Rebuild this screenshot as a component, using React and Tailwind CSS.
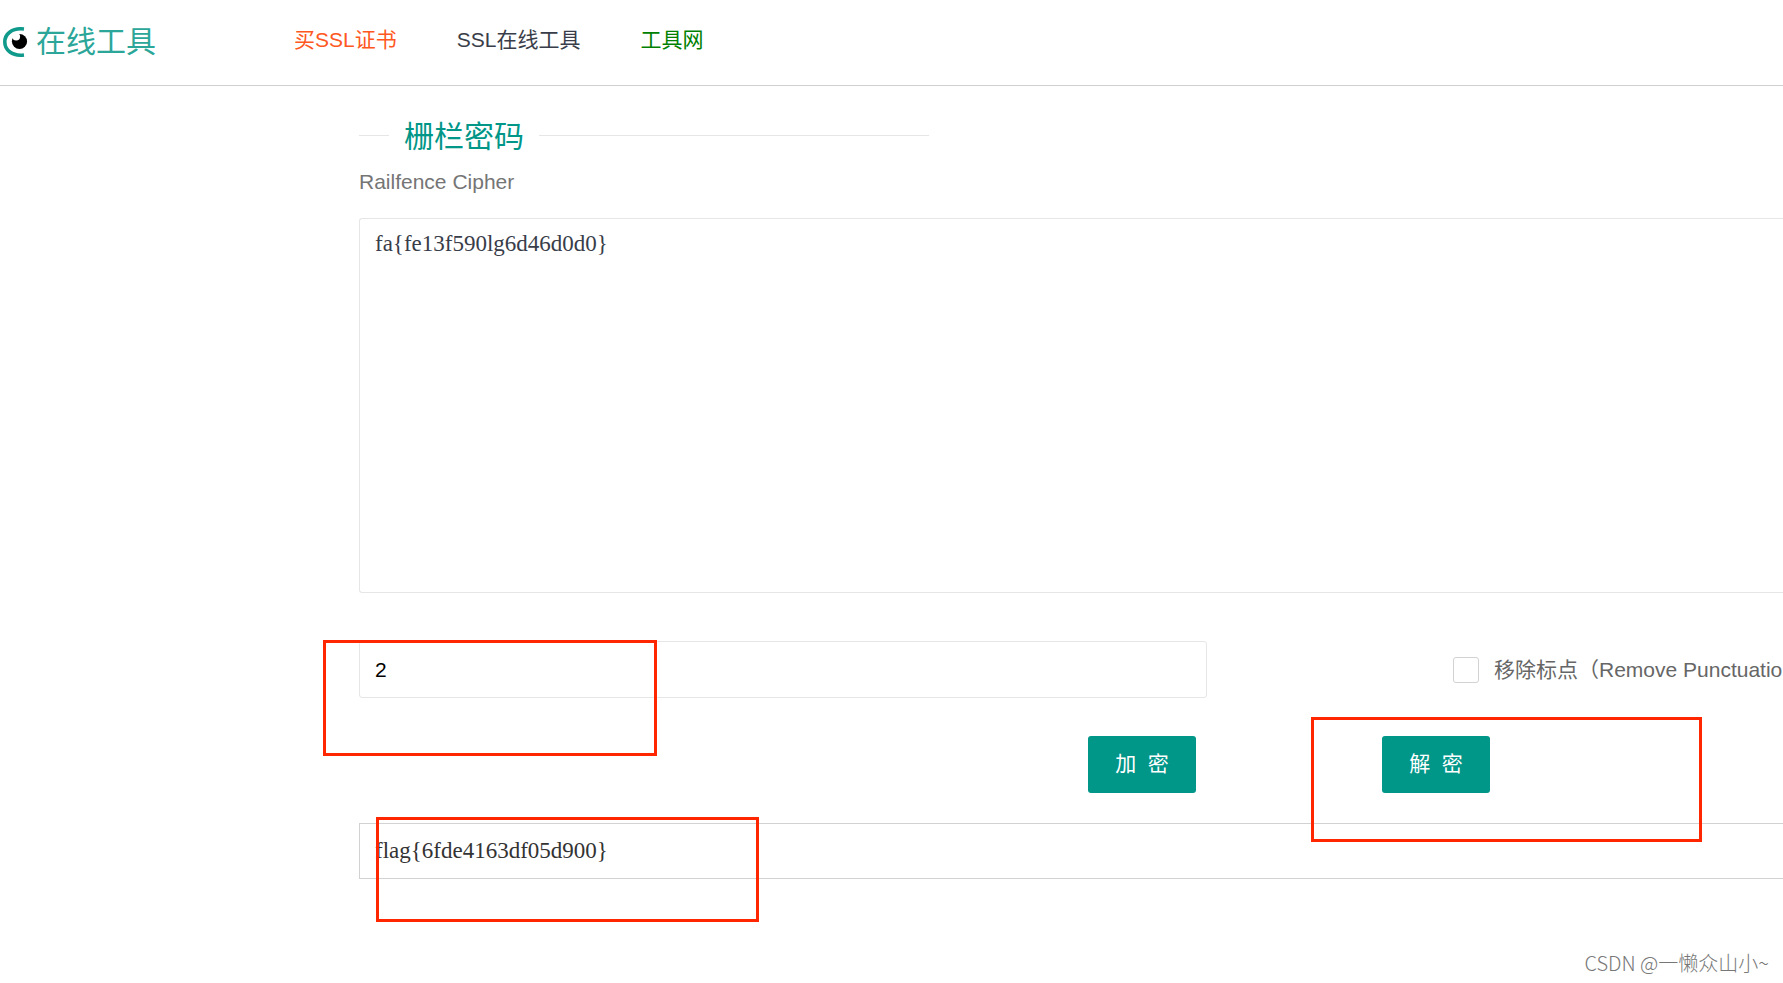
/**
 * Railfence cipher page
 */

import { useState } from 'react';

const NAV_LINKS = [
  { label: '买SSL证书', color: 'text-[#ff5722]' },
  { label: 'SSL在线工具', color: 'text-[#393d49]' },
  { label: '工具网', color: 'text-[#008000]' },
];

const LogoIcon = () => (
  <svg width="25" height="30" viewBox="0 0 25 30" aria-hidden="true">
    <path d="M21 2C9 .6 1.800 7 1.800 15S9 29.400 21 28" fill="none" stroke="#109a8c" strokeWidth="3.600" />
    <circle cx="16.500" cy="14.500" r="7.600" fill="#000" />
    <circle cx="13.200" cy="9.600" r="3.900" fill="#fff" />
  </svg>
);

// Red frame drawn over a part of the form
const Mark = ({ className }) => (
  <div className={`pointer-events-none absolute border-[3px] border-[#ff2600] ${className}`} />
);

const CipherButton = ({ children, onClick }) => (
  <button
    type="button"
    onClick={onClick}
    className="h-[57px] w-[108px] rounded-[3px] bg-[#009688] pb-0.5 whitespace-pre text-white hover:opacity-80"
  >
    {children}
  </button>
);

const Header = () => (
  <header className="flex h-[86px] items-center border-b border-[#d0d0d0] pl-[3px]">
    <a href="#" className="flex w-[291px] items-center gap-2 pb-0.5 text-3xl text-[#2ba699]">
      <LogoIcon />
      在线工具
    </a>
    <nav className="flex gap-[60px] pb-1.5">
      {NAV_LINKS.map((link) => (
        <a key={link.label} href="#" className={link.color}>
          {link.label}
        </a>
      ))}
    </nav>
  </header>
);

const App = () => {
  const [text, setText] = useState('fa{fe13f590lg6d46d0d0}');
  const [rails, setRails] = useState('2');
  const [result] = useState('flag{6fde4163df05d900}');
  const [removePunctuation, setRemovePunctuation] = useState(false);

  return (
    <div className="min-h-screen overflow-hidden bg-white font-['Liberation_Sans','Noto_Sans_CJK_SC',sans-serif] text-[21px] leading-[30px]">
      <Header />

      <main className="pt-[26px] pl-[359px]">
        <div className="flex w-[570px] items-center gap-[15px]">
          <span className="h-px w-[30px] bg-[#e6e6e6]" />
          <h1 className="pt-1 text-3xl leading-[42px] text-[#009688]">栅栏密码</h1>
          <span className="h-px flex-1 bg-[#e6e6e6]" />
        </div>

        <label htmlFor="source" className="block pt-[9px] pb-[21px] text-[#757575]">
          Railfence Cipher
        </label>
        <textarea
          id="source"
          value={text}
          onChange={(e) => setText(e.target.value)}
          className="block h-[375px] w-full resize-none rounded-l-[3px] border border-r-0 border-[#e6e6e6] px-[15px] py-2.5 font-['Liberation_Serif',serif] text-[23px] text-[#393d49] outline-none"
        />

        <div className="relative mt-12 flex items-center">
          <input
            type="text"
            aria-label="栏数"
            value={rails}
            onChange={(e) => setRails(e.target.value)}
            className="h-[57px] w-[848px] shrink-0 rounded-[3px] border border-[#e6e6e6] px-[15px] text-black outline-none"
          />
          <label className="ml-[246px] flex shrink-0 items-center gap-[15px] whitespace-nowrap text-[#666]">
            <input
              type="checkbox"
              checked={removePunctuation}
              onChange={(e) => setRemovePunctuation(e.target.checked)}
              className="size-[26px] appearance-none rounded-[3px] border border-[#d2d2d2] checked:bg-[#009688]"
            />
            移除标点（Remove Punctuatio
          </label>
          <Mark className="-top-px -left-9 h-[116px] w-[334px]" />
        </div>

        <div className="relative mt-[38px] flex gap-[186px] pl-[729px]">
          <CipherButton>加{'  '}密</CipherButton>
          <CipherButton>解{'  '}密</CipherButton>
          <Mark className="-top-[19px] left-[952px] z-10 h-[125px] w-[391px]" />
        </div>

        <div className="relative mt-[30px]">
          <input
            type="text"
            aria-label="结果"
            readOnly
            value={result}
            className="block h-14 w-full border border-r-0 border-[#d2d2d2] px-[15px] font-['Liberation_Serif',serif] text-[23px] text-[#333] outline-none"
          />
          <Mark className="-top-1.5 left-[17px] h-[105px] w-[383px]" />
        </div>
      </main>

      <footer className="mt-[70px] pr-3.5 text-right font-['Noto_Sans_CJK_SC',sans-serif] text-xl font-light text-[#777]">
        CSDN @一懒众山小~
      </footer>
    </div>
  );
};

export default App;
